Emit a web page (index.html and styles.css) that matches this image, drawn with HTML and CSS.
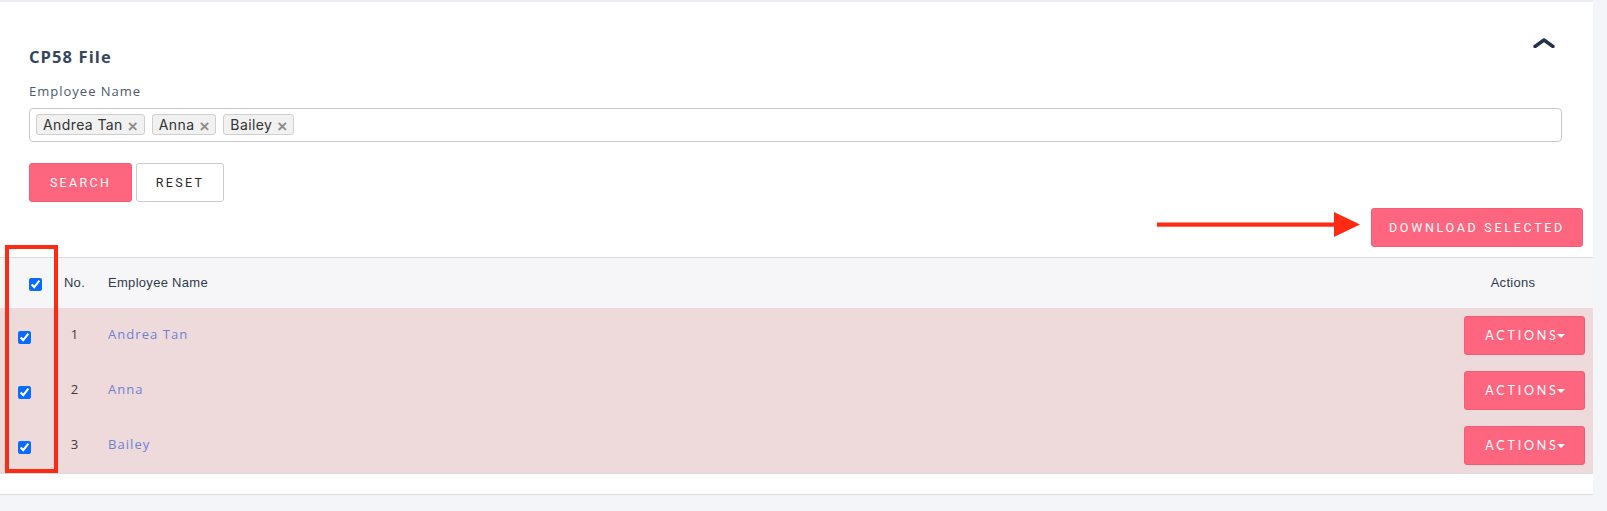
FILE: index.html
```html
<!DOCTYPE html>
<html>
<head>
<meta charset="utf-8">
<link rel="stylesheet" href="styles.css">
</head>
<body>
<div class="card">
  <div class="form">
    <div class="title-row">
      <h2 class="title">CP58 File</h2>
      <svg class="chevron" width="22" height="10" viewBox="0 0 22 10"><polyline points="2,8.5 11,2 20,8.5" fill="none" stroke="#263248" stroke-width="3.4" stroke-linecap="round" stroke-linejoin="round"/></svg>
    </div>
    <div class="label">Employee Name</div>
    <div class="multiselect">
      <span class="tag">Andrea Tan<span class="x">×</span></span>
      <span class="tag">Anna<span class="x">×</span></span>
      <span class="tag">Bailey<span class="x">×</span></span>
    </div>
    <div class="btns">
      <button class="btn btn-pink btn-search">SEARCH</button>
      <button class="btn btn-white btn-reset">RESET</button>
    </div>
  </div>
  <div class="download-row">
    <button class="btn btn-pink btn-download">DOWNLOAD SELECTED</button>
  </div>
  <div class="table">
    <div class="tr thead">
      <div class="td c-check c-check-head"><input type="checkbox" checked></div>
      <div class="td c-no">No.</div>
      <div class="td c-name">Employee Name</div>
      <div class="td c-act c-act-head">Actions</div>
    </div>
    <div class="tr row">
      <div class="td c-check"><input type="checkbox" checked></div>
      <div class="td c-no">1</div>
      <div class="td c-name"><a class="link">Andrea Tan</a></div>
      <div class="td c-act"><button class="btn-actions">ACTIONS<span class="caret"></span></button></div>
    </div>
    <div class="tr row">
      <div class="td c-check"><input type="checkbox" checked></div>
      <div class="td c-no">2</div>
      <div class="td c-name"><a class="link">Anna</a></div>
      <div class="td c-act"><button class="btn-actions">ACTIONS<span class="caret"></span></button></div>
    </div>
    <div class="tr row row-last">
      <div class="td c-check"><input type="checkbox" checked></div>
      <div class="td c-no">3</div>
      <div class="td c-name"><a class="link">Bailey</a></div>
      <div class="td c-act"><button class="btn-actions">ACTIONS<span class="caret"></span></button></div>
    </div>
  </div>
  <div class="card-foot"></div>

  <div class="annot-box"></div>
  <div class="annot-arrow">
    <svg width="204" height="26" viewBox="0 0 204 26"><rect x="0" y="10.5" width="180" height="4.2" fill="#ff2a14"/><polygon points="177,0 203,12.6 177,25" fill="#ff2a14"/></svg>
  </div>
</div>
</body>
</html>
```

FILE: styles.css
```css
* { box-sizing: border-box; }
body {
  margin: 0;
  background: #f4f5f8;
  font-family: "Liberation Sans", Arial, sans-serif;
}
.card {
  position: relative;
  width: 1593px;
  background: #fff;
  border-top: 2px solid #eaedf3;
  border-bottom: 1px solid #dddddd;
}
.form {
  padding: 45px 31px 0 29px;
}
.title-row {
  display: flex;
  justify-content: space-between;
  align-items: flex-start;
  height: 20px;
}
.title {
  margin: 0;
  font-family: "Open Sans", sans-serif;
  font-weight: 700;
  font-size: 16.5px;
  line-height: 20px;
  color: #34465c;
  letter-spacing: 1.1px;
}
.chevron {
  margin-top: -9px;
  margin-right: 7px;
}
.label {
  margin-top: 16px;
  font-family: "Open Sans", sans-serif;
  font-size: 13px;
  line-height: 16px;
  color: #4b5a6e;
  letter-spacing: 1px;
}
.multiselect {
  margin-top: 9px;
  height: 34px;
  border: 1px solid #c9c9c9;
  border-radius: 4px;
  padding: 5px 6px 0;
  display: flex;
  gap: 7px;
  align-items: flex-start;
}
.tag {
  display: inline-flex;
  align-items: center;
  height: 21px;
  padding: 0 6px 0 6px;
  background: #f1f1f1;
  border: 1px solid #cfcfcf;
  border-radius: 3px;
  font-family: "Inter", sans-serif;
  font-size: 14px;
  color: #333;
  letter-spacing: 0.4px;
}
.tag .x {
  margin-left: 5px;
  margin-top: 4px;
  font-family: "Liberation Sans", Arial, sans-serif;
  font-size: 17px;
  font-weight: 700;
  color: #8d8d8d;
  line-height: 1;
  letter-spacing: 0;
}
.btns {
  margin-top: 21px;
  display: flex;
  gap: 4px;
}
.btn {
  height: 39px;
  border-radius: 3px;
  font-family: "Roboto", sans-serif;
  font-weight: 400;
  font-size: 12.5px;
  letter-spacing: 2.3px;
  padding: 0;
  cursor: pointer;
}
.btn-pink {
  background: #fe6680;
  border: 1px solid #f75a74;
  color: #fff;
}
.btn-white {
  background: #fff;
  border: 1px solid #cccccc;
  color: #2a2a2a;
}
.btn-search { width: 103px; }
.btn-reset { width: 88px; }
.download-row {
  margin-top: 6px;
  display: flex;
  justify-content: flex-end;
  padding-right: 10px;
}
.btn-download {
  width: 212px;
  font-size: 12.5px;
  letter-spacing: 2.7px;
}
.table {
  margin-top: 10px;
  border-top: 1px solid #dcdcdc;
  font-size: 13px;
}
.tr {
  display: grid;
  grid-template-columns: 56px 37px 1fr 153px;
  align-items: center;
}
.thead {
  height: 50px;
  background: #f6f6f8;
  color: #2f3b4c;
  font-family: "Liberation Sans", Arial, sans-serif;
  font-size: 13px;
  letter-spacing: 0.3px;
}
.thead .c-no, .thead .c-name, .thead .c-act-head { padding-bottom: 2px; }
.row {
  height: 55px;
  background: #eedada;
  color: #3a3a3a;
}
.row-last {
  height: 56px;
  border-bottom: 1px solid #dcdcdc;
}
.td { display: flex; align-items: center; }
.c-check { padding-left: 18px; }
.c-check-head { padding-left: 29px; padding-top: 3px; }
.c-check input {
  margin: 0;
  width: 13px;
  height: 13px;
  accent-color: #0a6cff;
}
.row .c-check { padding-top: 3px; }
.c-no { justify-content: center; font-family: "Open Sans", sans-serif; font-size: 13px; }
.thead .c-no { font-family: "Liberation Sans", Arial, sans-serif; }
.row .c-no, .row .c-name { padding-bottom: 3px; }
.c-name { padding-left: 15px; }
.link {
  font-family: "Open Sans", sans-serif;
  font-size: 13px;
  color: #6e80d6;
  letter-spacing: 1.05px;
}
.c-act { justify-content: flex-end; padding-right: 8px; }
.c-act-head { justify-content: center; padding-right: 7px; }
.btn-actions {
  width: 121px;
  height: 39px;
  background: #fe6680;
  border: 1px solid #f75a74;
  border-radius: 3px;
  color: #fff;
  font-family: "Lato", sans-serif;
  font-size: 12.5px;
  letter-spacing: 2.8px;
  padding: 0 0 0 1px;
  display: flex;
  align-items: center;
  justify-content: center;
}
.caret {
  display: inline-block;
  margin-left: -2px;
  width: 0;
  height: 0;
  border-left: 4px solid transparent;
  border-right: 4px solid transparent;
  border-top: 4px solid #fff;
}
.card-foot { height: 20px; }
.annot-box {
  position: absolute;
  left: 5px;
  top: 243px;
  width: 53px;
  height: 228px;
  border: 4.5px solid #ff2a14;
}
.annot-arrow {
  position: absolute;
  left: 1157px;
  top: 210px;
  line-height: 0;
}
```
